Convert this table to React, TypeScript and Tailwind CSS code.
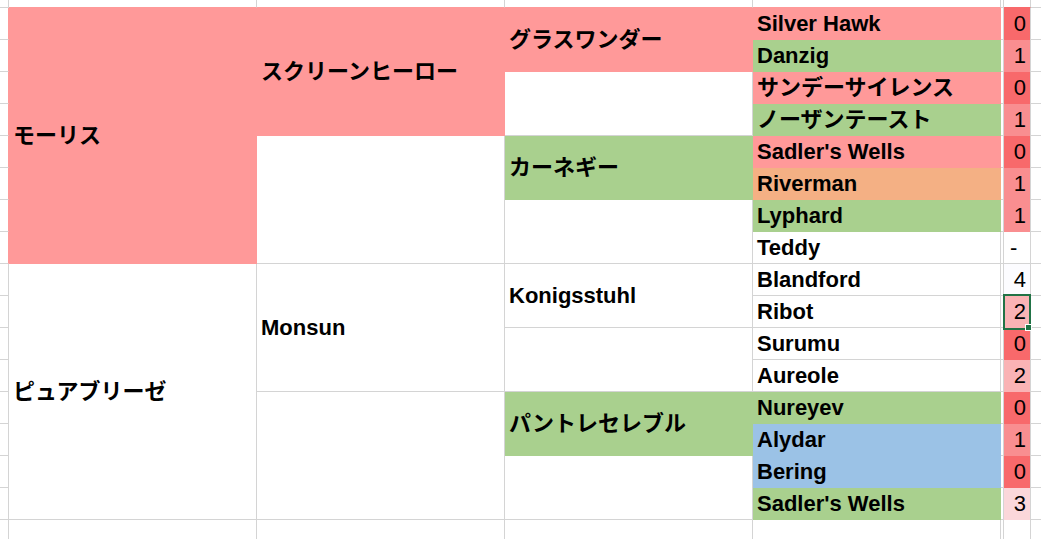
import React from 'react';

// Pedigree sheet: four generations, one column each, plus a score column.
const PINK = 'bg-[#ff9999]';
const GREEN = 'bg-[#a9d08e]';
const ORANGE = 'bg-[#f4b084]';
const BLUE = 'bg-[#9bc2e6]';

type Cell = { span: 1 | 2 | 4 | 8; text?: string; bg?: string };

const HEIGHT: Record<number, string> = { 1: 'h-8', 2: 'h-16', 4: 'h-32', 8: 'h-64' };

const gen1: Cell[] = [
  { span: 8, text: 'モーリス', bg: PINK },
  { span: 8, text: 'ピュアブリーゼ' },
];

const gen2: Cell[] = [
  { span: 4, text: 'スクリーンヒーロー', bg: PINK },
  { span: 4 },
  { span: 4, text: 'Monsun' },
  { span: 4 },
];

const gen3: Cell[] = [
  { span: 2, text: 'グラスワンダー', bg: PINK },
  { span: 2 },
  { span: 2, text: 'カーネギー', bg: GREEN },
  { span: 2 },
  { span: 2, text: 'Konigsstuhl' },
  { span: 2 },
  { span: 2, text: 'パントレセレブル', bg: GREEN },
  { span: 2 },
];

const gen4: Cell[] = [
  { span: 1, text: 'Silver Hawk', bg: PINK },
  { span: 1, text: 'Danzig', bg: GREEN },
  { span: 1, text: 'サンデーサイレンス', bg: PINK },
  { span: 1, text: 'ノーザンテースト', bg: GREEN },
  { span: 1, text: "Sadler's Wells", bg: PINK },
  { span: 1, text: 'Riverman', bg: ORANGE },
  { span: 1, text: 'Lyphard', bg: GREEN },
  { span: 1, text: 'Teddy' },
  { span: 1, text: 'Blandford' },
  { span: 1, text: 'Ribot' },
  { span: 1, text: 'Surumu' },
  { span: 1, text: 'Aureole' },
  { span: 1, text: 'Nureyev', bg: GREEN },
  { span: 1, text: 'Alydar', bg: BLUE },
  { span: 1, text: 'Bering', bg: BLUE },
  { span: 1, text: "Sadler's Wells", bg: GREEN },
];

const scores: (number | '-')[] = [0, 1, 0, 1, 0, 1, 1, '-', 4, 2, 0, 2, 0, 1, 0, 3];

// colour scale, red (0) → white (4)
const SCALE: Record<string, string> = {
  '0': 'bg-[#f8696b]',
  '1': 'bg-[#f98e90]',
  '2': 'bg-[#fab3b5]',
  '3': 'bg-[#fbd7da]',
  '4': 'bg-[#fcfcff]',
};

const LINE = 'border-[#d4d4d4]';

const GenColumn: React.FC<{ cells: Cell[]; width: string }> = ({ cells, width }) => (
  <div className={`flex flex-col ${width}`}>
    {cells.map((c, i) => (
      <div
        key={i}
        className={`flex items-center pl-1 whitespace-nowrap font-bold ${HEIGHT[c.span]} ${
          c.bg ? c.bg : `border-r border-b ${LINE}`
        }`}
      >
        {c.text}
      </div>
    ))}
  </div>
);

const Rows16: React.FC<{ className: string; cellClass: (i: number) => string }> = ({ className, cellClass }) => (
  <div className={`flex flex-col ${className}`}>
    {Array.from({ length: 16 }).map((_, i) => (
      <div key={i} className={`h-8 ${cellClass(i)}`} />
    ))}
  </div>
);

export default function App() {
  return (
    <div className="w-[1041px] h-[539px] overflow-hidden bg-white text-black text-[22px] leading-none font-['Liberation_Sans','Noto_Sans_CJK_JP',sans-serif]">
      {/* header strip */}
      <div className="flex h-[8px]">
        <div className={`w-[9px] border-r border-b ${LINE}`} />
        <div className={`w-[248px] border-r border-b ${LINE} border-b-[#ff9999]`} />
        <div className={`w-[248px] border-r border-b ${LINE} border-b-[#ff9999]`} />
        <div className={`w-[248px] border-r border-b ${LINE} border-b-[#ff9999]`} />
        <div className={`w-[248px] border-r border-b ${LINE} border-b-[#ff9999]`} />
        <div className={`w-[3px] border-r border-b ${LINE}`} />
        <div className={`w-[27px] border-r border-b ${LINE} border-b-[#f8696b]`} />
        <div className={`flex-1 border-b ${LINE}`} />
      </div>

      {/* body */}
      <div className="flex">
        <Rows16
          className="w-[9px]"
          cellClass={(i) => `border-r border-b ${LINE} ${i < 8 ? 'border-r-[#ff9999]' : ''}`}
        />
        <GenColumn cells={gen1} width="w-[248px]" />
        <GenColumn cells={gen2} width="w-[248px]" />
        <GenColumn cells={gen3} width="w-[248px]" />
        <GenColumn cells={gen4} width="w-[248px]" />
        <Rows16 className="w-[3px]" cellClass={() => `border-r border-b ${LINE}`} />
        <div className="flex flex-col w-[27px]">
          {scores.map((s, i) => {
            const filled = s !== '-';
            return (
              <div
                key={i}
                className={`relative h-8 flex items-center border-r ${LINE} ${
                  filled ? `justify-end pr-1 ${SCALE[String(s)]}` : 'pl-[6px] border-b'
                }`}
              >
                {s}
                {i === 9 && (
                  <div className="absolute z-10 -top-[2px] -left-px -right-px -bottom-[2px] border-2 border-[#217346]">
                    <div className="absolute -right-[3px] -bottom-[3px] w-[7px] h-[7px] bg-[#217346] border border-white" />
                  </div>
                )}
              </div>
            );
          })}
        </div>
        <Rows16 className="flex-1" cellClass={() => `border-b ${LINE}`} />
      </div>

      {/* trailing row */}
      <div className="flex h-[19px]">
        <div className={`w-[9px] border-r ${LINE}`} />
        <div className={`w-[248px] border-r ${LINE}`} />
        <div className={`w-[248px] border-r ${LINE}`} />
        <div className={`w-[248px] border-r ${LINE}`} />
        <div className={`w-[248px] border-r ${LINE}`} />
        <div className={`w-[3px] border-r ${LINE}`} />
        <div className={`w-[27px] border-r ${LINE}`} />
        <div className="flex-1" />
      </div>
    </div>
  );
}
